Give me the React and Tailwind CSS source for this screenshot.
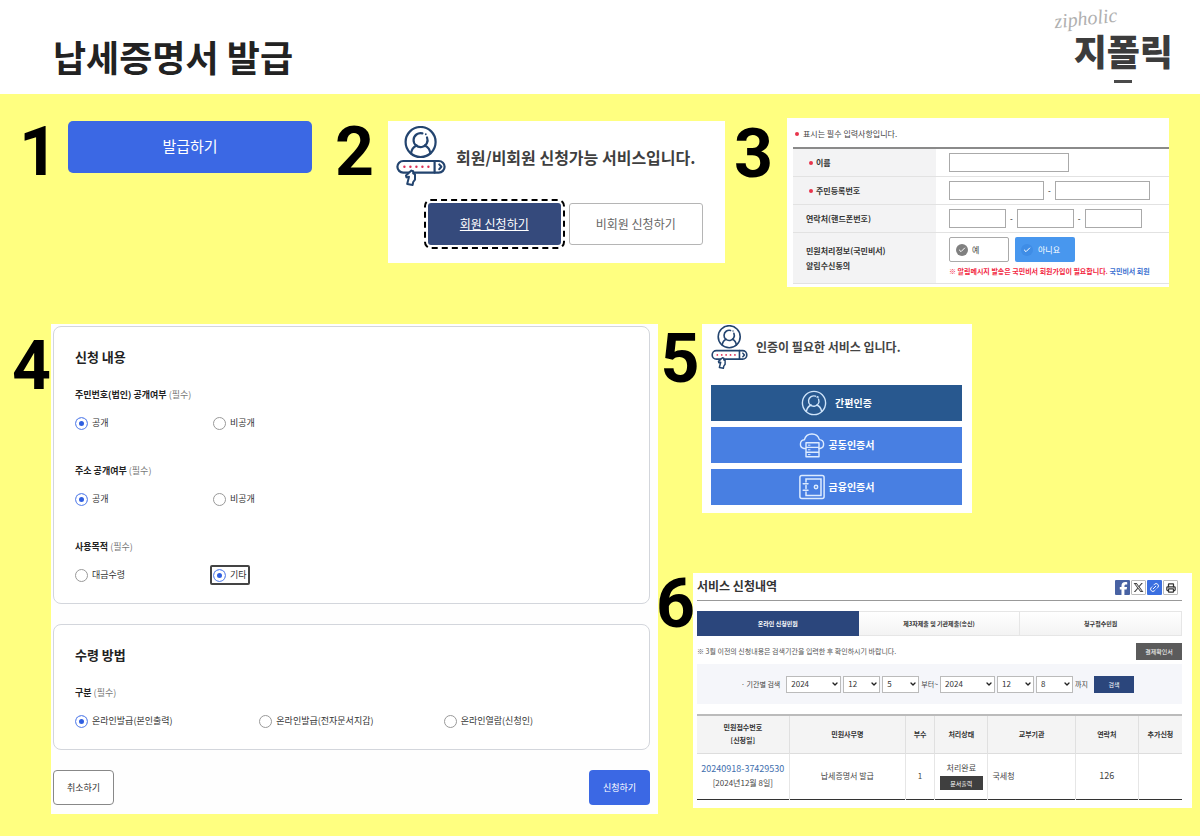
import React from 'react';
import { Check, ChevronDown, Link2, Printer } from "lucide-react";
import { FaFacebookF, FaXTwitter } from "react-icons/fa6";

const PAGE_FONT = "font-['Noto_Sans_CJK_KR',sans-serif]";

function StepNumber({ children, className }) {
  return (
    <div className={`relative z-10 flex font-['Roboto',sans-serif] text-[68px] leading-[62px] font-bold text-black ${className}`}>
      {children}
    </div>
  );
}

function PersonCircle({ className }) {
  return (
    <svg viewBox="0 0 26 26" className={className} fill="none" stroke="currentColor" strokeWidth="1.4" strokeLinecap="round">
      <circle cx="13" cy="13" r="11.6" />
      <path d="M17.6 9.2A5.2 5.2 0 1 1 14.6 6.2" />
      <path d="M5.4 21.4C6 18 7.6 16 10.2 15" />
      <path d="M20.6 21.4C20 18 18.4 16 15.8 15" />
      <circle cx="16.6" cy="7.2" r="0.4" />
    </svg>
  );
}

function CloudServer({ className }) {
  return (
    <svg viewBox="0 0 26 26" className={className} fill="none" stroke="currentColor" strokeWidth="1.4" strokeLinecap="round" strokeLinejoin="round">
      <path d="M6.5 16.5H5A4.4 4.4 0 0 1 5.4 7.8 7.8 7.8 0 0 1 20.4 7.6 4.5 4.5 0 0 1 21 16.5H20" />
      <path d="M7 10.8H20V24.8H7ZM7 15.4H20M7 20.2H20" />
      <path d="M9.4 13.2H11M9.4 17.8H11M9.4 22.6H11" strokeWidth="1" />
    </svg>
  );
}

function Vault({ className }) {
  return (
    <svg viewBox="0 0 26 26" className={className} fill="none" stroke="currentColor" strokeWidth="1.5" strokeLinecap="round">
      <rect x="0.9" y="1.4" width="24.2" height="23.2" rx="2" />
      <path d="M7 8V5H22V21.4H7V18M7 11.6V14.4" />
      <circle cx="17" cy="13" r="1.7" />
      <path d="M4.2 9.8H9M4.2 16.2H9" />
    </svg>
  );
}

// Person badge over a password field with a pointing hand
function IdKeyIcon({ className }) {
  return (
    <svg viewBox="0 0 50 60" className={className} fill="none" stroke="#23446f" strokeWidth="2.2" strokeLinecap="round" strokeLinejoin="round">
      <circle cx="24.6" cy="16" r="15" />
      <path d="M31 11.4A7 7 0 1 1 26.4 7.4" />
      <path d="M15 27.5C15.4 23.4 17.4 20.8 20.6 19.4" />
      <path d="M34.4 27.5C34 23.4 32 20.8 28.8 19.4" />
      <path d="M29.8 8.2v0.1" strokeWidth="1.8" />
      <rect x="1.4" y="35" width="47.2" height="11.6" rx="5.8" fill="#fff" />
      <path d="M38.6 35V46.6" />
      <path d="M43.2 38.4L45.4 40.8L43.2 43.2" strokeWidth="2" />
      <g fill="#dc2f55" stroke="none">
        <circle cx="8.4" cy="40.8" r="1.2" />
        <circle cx="14.4" cy="40.8" r="1.2" />
        <circle cx="20.4" cy="40.8" r="1.2" />
        <circle cx="26.4" cy="40.8" r="1.2" />
        <circle cx="32.4" cy="40.8" r="1.2" />
      </g>
      <path d="M15.4 44.6L10 49.6L10.4 51.4L13 50.8L11.2 58L16.6 59L17.2 56L19 53.6V48.4L17.2 47.4V45.2Z" fill="#fff" strokeWidth="2" />
    </svg>
  );
}

function Brand() {
  return (
    <div className="relative flex flex-col items-center text-[#3c3c3c]">
      <span className="absolute -top-6 -left-5 -rotate-6 font-['Liberation_Serif',serif] text-xl leading-5 italic text-[#b0b0b0]">zipholic</span>
      <span className="text-[36px] leading-9 font-black">지폴릭</span>
      <span className="mt-3 h-[3px] w-[18px] bg-[#4a4a4a]"></span>
    </div>
  );
}

function MemberCard() {
  return (
    <div className="bg-white px-2 pt-[5px] pb-[18px]">
      <div className="flex items-center gap-[10px]">
        <IdKeyIcon className="h-[60px] w-[50px] shrink-0" />
        <h2 className="pt-[2px] text-base font-bold whitespace-nowrap text-[#3f3f3f]">회원/비회원 신청가능 서비스입니다.</h2>
      </div>
      <div className="mt-[17px] mr-[14px] ml-8 flex gap-2">
        <button className="h-[42px] flex-1 rounded-[3px] bg-[#354a7c] text-xs text-white underline outline-2 outline-offset-2 outline-dashed outline-black">회원 신청하기</button>
        <button className="h-[42px] flex-1 rounded-[3px] border border-[#b5b5b5] bg-white text-xs text-[#666]">비회원 신청하기</button>
      </div>
    </div>
  );
}

const inputClass = "h-[19px] border border-[#aaa] bg-white px-1 text-[8px]";

function ApplicantRow({ label, htmlFor, required, children }) {
  return (
    <div className="flex border-b border-[#e2e2e2]">
      <div className="flex w-[143px] shrink-0 items-center bg-[#f3f3f4] pl-[13px] text-[8px] leading-[15px] font-bold text-[#333]">
        {required && <span className="mx-[3px] h-[4px] w-[4px] rounded-full bg-[#e8344b]"></span>}
        <label htmlFor={htmlFor}>{label}</label>
      </div>
      <div className="min-w-0 flex-1 pl-[13px]">{children}</div>
    </div>
  );
}

function ApplicantCard() {
  return (
    <div className="overflow-hidden bg-white pb-[3px] pl-[6px] text-[8px]">
      <p className="flex h-[29px] items-center gap-1 pt-[2px] pl-[2px] text-[#444]">
        <span className="h-[4px] w-[4px] rounded-full bg-[#e8344b]"></span>
        표시는 필수 입력사항입니다.
      </p>
      <div className="border-t-2 border-[#8a8a8a]">
        <ApplicantRow label="이름" htmlFor="name" required>
          <div className="flex h-[27px] items-center">
            <input id="name" className={`${inputClass} w-[120px]`} />
          </div>
        </ApplicantRow>
        <ApplicantRow label="주민등록번호" htmlFor="rrn" required>
          <div className="flex h-[27px] items-center gap-1">
            <input id="rrn" className={`${inputClass} w-[95px]`} />
            <span>-</span>
            <input aria-label="주민등록번호 뒷자리" className={`${inputClass} w-[95px]`} />
          </div>
        </ApplicantRow>
        <ApplicantRow label="연락처(핸드폰번호)" htmlFor="phone">
          <div className="flex h-[27px] items-center gap-1">
            <input id="phone" className={`${inputClass} w-[57px]`} />
            <span>-</span>
            <input aria-label="연락처 가운데자리" className={`${inputClass} w-[57px]`} />
            <span>-</span>
            <input aria-label="연락처 끝자리" className={`${inputClass} w-[57px]`} />
          </div>
        </ApplicantRow>
        <ApplicantRow label={<>민원처리정보(국민비서)<br />알림수신동의</>} htmlFor="alarm-yes">
          <div className="flex gap-[6px] pt-1">
            <button id="alarm-yes" className="flex h-[25px] w-[60px] items-center gap-1 rounded-[2px] border border-[#aaa] bg-white pl-[6px] text-[#444]">
              <span className="flex h-3 w-3 items-center justify-center rounded-full bg-[#808080] text-white"><Check size={8} strokeWidth={3} /></span>
              예
            </button>
            <button className="flex h-[25px] w-[60px] items-center gap-[5px] rounded-[2px] bg-[#4897ee] pl-[6px] text-white">
              <span className="flex h-3 w-3 items-center justify-center rounded-full bg-[#3f8de6]"><Check size={8} strokeWidth={3} /></span>
              아니요
            </button>
          </div>
          <p className="mt-[2px] mb-1 text-[7px] leading-[15px] font-bold whitespace-nowrap text-[#f2263f]">
            ※ 알림메시지 발송은 국민비서 회원가입이 필요합니다. <a href="#join" className="text-[#3a6fd0]">국민비서 회원</a>
          </p>
        </ApplicantRow>
      </div>
    </div>
  );
}

function Radio({ name, label, defaultChecked, focused }) {
  return (
    <div className="flex">
      <label className={`-m-[2px] inline-flex h-[18px] items-center gap-1 pl-[2px] text-[9px] whitespace-nowrap text-[#333] ${focused ? "rounded-[1px] outline-2 -outline-offset-1 outline-[#444]" : ""}`}>
        <input
          type="radio"
          name={name}
          defaultChecked={defaultChecked}
          className="h-[13px] w-[13px] shrink-0 appearance-none rounded-full border border-[#999] bg-white checked:border-[#6f92ee] checked:bg-[#2f5fe0] checked:shadow-[inset_0_0_0_3px_white]"
        />
        <span className="pr-[2px]">{label}</span>
      </label>
    </div>
  );
}

function Question({ title, children }) {
  return (
    <fieldset>
      <legend className="text-[9px] leading-[14px] font-bold text-[#222]">
        {title} <span className="font-normal text-[#777]">(필수)</span>
      </legend>
      {children}
    </fieldset>
  );
}

function RequestCard() {
  return (
    <div className="bg-[#fefefe] pt-[2px] pr-2 pb-[9px] pl-[2px]">
      <section className="rounded-lg border border-[#d3d6dc] bg-white px-[21px] pt-[20px] pb-[21px]">
        <h2 className="text-[13px] leading-5 font-bold text-[#222]">신청 내용</h2>
        <div className="mt-[21px] flex flex-col gap-[34px]">
          <Question title="주민번호(법인) 공개여부">
            <div className="mt-[14px] grid h-[14px] grid-cols-[138px_1fr] items-center">
              <Radio name="rrn-open" label="공개" defaultChecked />
              <Radio name="rrn-open" label="비공개" />
            </div>
          </Question>
          <Question title="주소 공개여부">
            <div className="mt-[14px] grid h-[14px] grid-cols-[138px_1fr] items-center">
              <Radio name="addr-open" label="공개" defaultChecked />
              <Radio name="addr-open" label="비공개" />
            </div>
          </Question>
          <Question title="사용목적">
            <div className="mt-[14px] grid h-[14px] grid-cols-[138px_1fr] items-center">
              <Radio name="purpose" label="대금수령" />
              <Radio name="purpose" label="기타" defaultChecked focused />
            </div>
          </Question>
        </div>
      </section>

      <section className="mt-5 rounded-lg border border-[#d3d6dc] bg-white px-[21px] pt-[20px] pb-[21px]">
        <h2 className="text-[13px] leading-5 font-bold text-[#222]">수령 방법</h2>
        <div className="mt-[21px]">
          <Question title="구분">
            <div className="mt-[14px] grid h-[14px] grid-cols-3 items-center">
              <Radio name="receive" label="온라인발급(본인출력)" defaultChecked />
              <Radio name="receive" label="온라인발급(전자문서지갑)" />
              <Radio name="receive" label="온라인열람(신청인)" />
            </div>
          </Question>
        </div>
      </section>

      <div className="mt-5 flex justify-between">
        <button className="h-[35px] w-[61px] rounded-[4px] border border-[#888] bg-white text-[9px] text-[#333]">취소하기</button>
        <button className="h-[35px] w-[61px] rounded-[4px] bg-[#3b68e4] text-[9px] text-white">신청하기</button>
      </div>
    </div>
  );
}

function AuthCard() {
  return (
    <div className="bg-white pt-[1px] pr-[10px] pb-[8px] pl-[9px]">
      <div className="flex items-center gap-2">
        <IdKeyIcon className="h-11 w-[37px] shrink-0" />
        <h2 className="text-xs font-bold whitespace-nowrap text-[#444]">인증이 필요한 서비스 입니다.</h2>
      </div>
      <div className="mt-4 flex flex-col gap-[6px] text-[10px] font-bold text-white">
        <button className="flex h-[36px] items-center justify-center gap-2 bg-[#28588f]">
          <PersonCircle className="h-[26px] w-[26px] text-[#cfe4fa]" />
          <span className="pb-[2px]">간편인증</span>
        </button>
        <button className="flex h-[36px] items-center justify-center gap-1 bg-[#487fe2]">
          <CloudServer className="h-[26px] w-[26px] text-[#dcebff]" />
          <span className="pb-[2px]">공동인증서</span>
        </button>
        <button className="flex h-[36px] items-center justify-center gap-1 bg-[#487fe2]">
          <Vault className="h-[26px] w-[26px] text-[#dcebff]" />
          <span className="pb-[2px]">금융인증서</span>
        </button>
      </div>
    </div>
  );
}

function DateSelect({ value, label, wide }) {
  return (
    <span className={`relative flex ${wide ? "w-[55px]" : "w-[37px]"}`}>
      <select aria-label={label} defaultValue={value} className="h-[17px] w-full appearance-none border border-[#bbb] bg-white pl-1 text-[8px] text-[#333]">
        <option>{value}</option>
      </select>
      <ChevronDown size={8} strokeWidth={4} className="pointer-events-none absolute top-1 right-[2px] text-[#222]" />
    </span>
  );
}

function HistoryCard() {
  return (
    <div className="bg-white pt-[5px] pr-[10px] pb-[8px] pl-1">
      <div className="flex h-[23px] items-start justify-between border-b border-[#999]">
        <h2 className="text-xs leading-4 font-bold text-[#333]">서비스 신청내역</h2>
        <div className="mr-1 flex gap-[1px] pt-[2px]">
          <a href="#facebook" aria-label="Facebook" className="flex h-[15px] w-[15px] items-end justify-end rounded-[1px] bg-[#4862a3] text-white"><FaFacebookF size={13} /></a>
          <a href="#x" aria-label="X" className="flex h-[15px] w-[15px] items-center justify-center rounded-[1px] border border-[#bbb] text-[#444]"><FaXTwitter size={11} /></a>
          <a href="#link" aria-label="링크" className="flex h-[15px] w-[15px] items-center justify-center rounded-[1px] bg-[#3b6fe0] text-white"><Link2 size={11} className="-rotate-45" /></a>
          <a href="#print" aria-label="인쇄" className="flex h-[15px] w-[15px] items-center justify-center rounded-[1px] border border-[#bbb] text-[#333]"><Printer size={10} strokeWidth={3} /></a>
        </div>
      </div>

      <div className="mt-[10px] grid h-[25px] grid-cols-3 text-[6px] font-bold text-[#333]">
        <button className="bg-[#2b467c] text-white">온라인 신청민원</button>
        <button className="border border-l-0 border-[#e6e6e6] bg-linear-to-b from-white to-[#f3f3f3]">제3자제출 및 기관제출(송신)</button>
        <button className="border border-l-0 border-[#e6e6e6] bg-linear-to-b from-white to-[#f3f3f3]">청구접수민원</button>
      </div>

      <div className="mt-[7px] flex h-[17px] items-center justify-between">
        <p className="text-[7px] whitespace-nowrap text-[#555]">※ 3월 이전의 신청내용은 검색기간을 입력한 후 확인하시기 바랍니다.</p>
        <button className="h-[17px] w-[46px] bg-[#5b5b5b] text-[6px] text-white">결제확인서</button>
      </div>

      <div className="mt-1 flex h-10 items-center justify-center gap-[2px] bg-[#f5f6fa] pr-1 text-[7px] whitespace-nowrap text-[#444]">
        <span className="mr-1">· 기간별 검색</span>
        <DateSelect wide value="2024" label="시작 연도" />
        <DateSelect value="12" label="시작 월" />
        <DateSelect value="5" label="시작 일" />
        <span>부터~</span>
        <DateSelect wide value="2024" label="종료 연도" />
        <DateSelect value="12" label="종료 월" />
        <DateSelect value="8" label="종료 일" />
        <span>까지</span>
        <button className="ml-1 h-[17px] w-10 bg-[#2b467c] text-[6px] text-white">검색</button>
      </div>

      <table className="mt-[10px] w-full table-fixed border-collapse border-t-2 border-b border-t-[#bbb] border-b-[#333] text-center text-[8px] text-[#444]">
        <colgroup>
          <col className="w-[19%]" />
          <col className="w-[24%]" />
          <col className="w-[6%]" />
          <col className="w-[11%]" />
          <col className="w-[18%]" />
          <col className="w-[13%]" />
          <col className="w-[9%]" />
        </colgroup>
        <thead className="bg-[#f4f4f4] text-[7px] text-[#333]">
          <tr className="h-[38px] divide-x divide-[#e0e0e0] border-b border-[#ddd]">
            <th className="leading-[13px]">민원접수번호<br />[신청일]</th>
            <th>민원사무명</th>
            <th>부수</th>
            <th>처리상태</th>
            <th>교부기관</th>
            <th>연락처</th>
            <th>추가신청</th>
          </tr>
        </thead>
        <tbody>
          <tr className="h-[46px] divide-x divide-[#e6e6e6]">
            <td className="leading-[14px] whitespace-nowrap">
              <a href="#detail" className="text-[9px] text-[#3f6fae]">20240918-37429530</a><br />[2024년12월 8일]
            </td>
            <td>납세증명서 발급</td>
            <td>1</td>
            <td>
              처리완료
              <button className="mx-auto mt-[2px] block h-[14px] w-[43px] bg-[#3f3f3f] text-[6px] text-white">문서출력</button>
            </td>
            <td className="pl-1 text-left">국세청</td>
            <td className="text-[9px]">126</td>
            <td></td>
          </tr>
        </tbody>
      </table>
    </div>
  );
}

export default function App() {
  return (
    <div className={`flex min-h-screen flex-col bg-[#ffff80] ${PAGE_FONT}`}>
      <header className="flex h-[94px] justify-between bg-white pr-[27px] pl-[53px]">
        <h1 className="pt-[30px] text-[36px] leading-[52px] font-bold text-[#222]">납세증명서 발급</h1>
        <div className="pt-8">
          <Brand />
        </div>
      </header>

      <main className="flex flex-1 flex-col gap-[37px] pt-6 pb-[20px]">
        <div className="grid grid-cols-[68fr_244fr_76fr_337fr_62fr_382fr_31fr] items-start">
          <StepNumber className="justify-end pt-[3px] pr-[10px]">1</StepNumber>
          <button className="mt-[3px] h-[52px] rounded-[5px] bg-[#3b68e4] pb-[2px] text-[15px] text-white">발급하기</button>
          <StepNumber className="justify-end pt-[3px] pr-[14px]">2</StepNumber>
          <div className="mt-[3px]">
            <MemberCard />
          </div>
          <StepNumber className="justify-end pt-[5px] pr-[14px]">3</StepNumber>
          <ApplicantCard />
        </div>

        <div className="grid grid-cols-[minmax(0,51fr)_minmax(0,607fr)_minmax(0,542fr)] items-start">
          <StepNumber className="justify-end pt-[11px]">4</StepNumber>
          <RequestCard />
          <div className="flex flex-col gap-[60px]">
            <div className="grid grid-cols-[minmax(0,44fr)_minmax(0,270fr)_minmax(0,228fr)] items-start">
              <StepNumber className="justify-center pt-[4px]">5</StepNumber>
              <AuthCard />
            </div>
            <div className="grid grid-cols-[minmax(0,35fr)_minmax(0,499fr)_minmax(0,8fr)] items-start">
              <StepNumber className="justify-center">6</StepNumber>
              <HistoryCard />
            </div>
          </div>
        </div>
      </main>
    </div>
  );
}
